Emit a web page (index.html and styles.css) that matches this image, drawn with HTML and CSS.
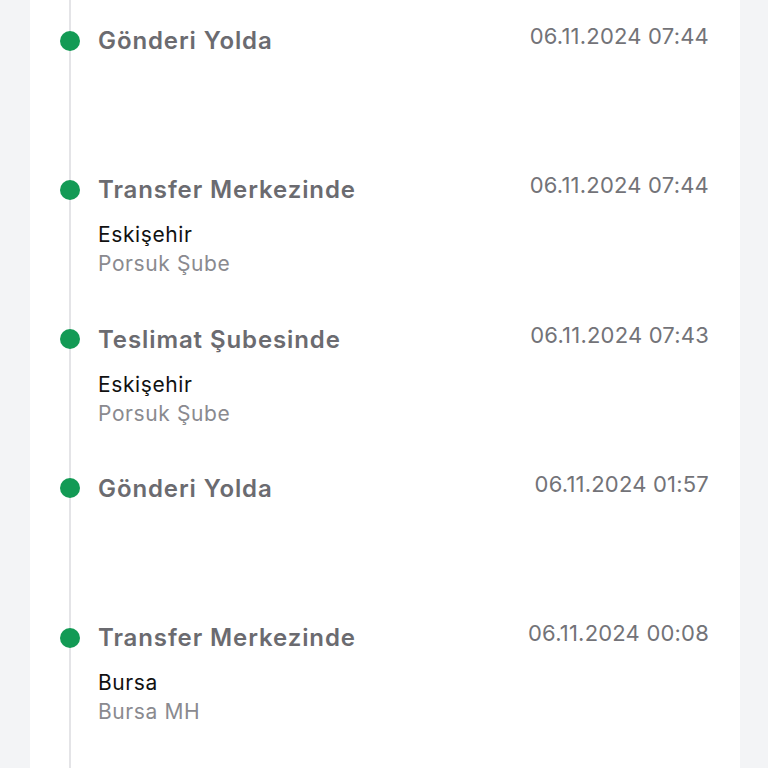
FILE: index.html
```html
<!DOCTYPE html>
<html lang="tr">
<head>
    <meta charset="UTF-8">
    <meta name="viewport" content="width=device-width, initial-scale=1.0">
    <title>Gönderi Hareketleri</title>
    <link rel="stylesheet" href="styles.css">
</head>
<body>
    <div class="card">
        <ul class="timeline">
            <li class="event">
                <span class="dot"></span>
                <div class="event-head">
                    <span class="event-title">Gönderi Yolda</span>
                    <span class="event-date">06.11.2024 07:44</span>
                </div>
            </li>
            <li class="event">
                <span class="dot"></span>
                <div class="event-head">
                    <span class="event-title">Transfer Merkezinde</span>
                    <span class="event-date">06.11.2024 07:44</span>
                </div>
                <div class="event-place">
                    <div class="city">Eskişehir</div>
                    <div class="branch">Porsuk Şube</div>
                </div>
            </li>
            <li class="event">
                <span class="dot"></span>
                <div class="event-head">
                    <span class="event-title">Teslimat Şubesinde</span>
                    <span class="event-date">06.11.2024 07:43</span>
                </div>
                <div class="event-place">
                    <div class="city">Eskişehir</div>
                    <div class="branch">Porsuk Şube</div>
                </div>
            </li>
            <li class="event">
                <span class="dot"></span>
                <div class="event-head">
                    <span class="event-title">Gönderi Yolda</span>
                    <span class="event-date">06.11.2024 01:57</span>
                </div>
            </li>
            <li class="event">
                <span class="dot"></span>
                <div class="event-head">
                    <span class="event-title">Transfer Merkezinde</span>
                    <span class="event-date">06.11.2024 00:08</span>
                </div>
                <div class="event-place">
                    <div class="city">Bursa</div>
                    <div class="branch">Bursa MH</div>
                </div>
            </li>
        </ul>
    </div>
</body>
</html>
```

FILE: styles.css
```css
html, body {
    margin: 0;
    height: 100%;
    overflow: hidden;
}
body {
    font-family: Inter, "Noto Sans", sans-serif;
    background-color: #f3f4f6;
}
.card {
    position: relative;
    box-sizing: border-box;
    margin-left: 30px;
    width: 710px;
    min-height: 100%;
    background-color: #fff;
    padding: 26px 31px 0 68px;
}
/* vertical timeline rail */
.card::before {
    content: "";
    position: absolute;
    left: 39px;
    top: 0;
    bottom: 0;
    width: 2px;
    background-color: #e4e4e7;
}
.timeline {
    list-style: none;
    margin: 0;
    padding: 0;
}
.event {
    position: relative;
    height: 149.25px;
}
.dot {
    position: absolute;
    left: -38px;
    top: 4.5px;
    width: 20px;
    height: 20px;
    border-radius: 50%;
    background-color: #139a55;
}
.event-head {
    display: flex;
    justify-content: space-between;
    align-items: flex-start;
    line-height: 29px;
}
.event-title {
    font-size: 24px;
    font-weight: 600;
    letter-spacing: 0.9px;
    color: #6b6b70;
}
.event-date {
    font-size: 22px;
    letter-spacing: 0.2px;
    color: #737378;
    margin-top: -4px;
}
.event-place {
    margin-top: 16px;
    font-size: 21px;
    line-height: 29px;
    letter-spacing: 0.6px;
}
.city {
    color: #111;
}
.branch {
    color: #8a8a8f;
}
```
